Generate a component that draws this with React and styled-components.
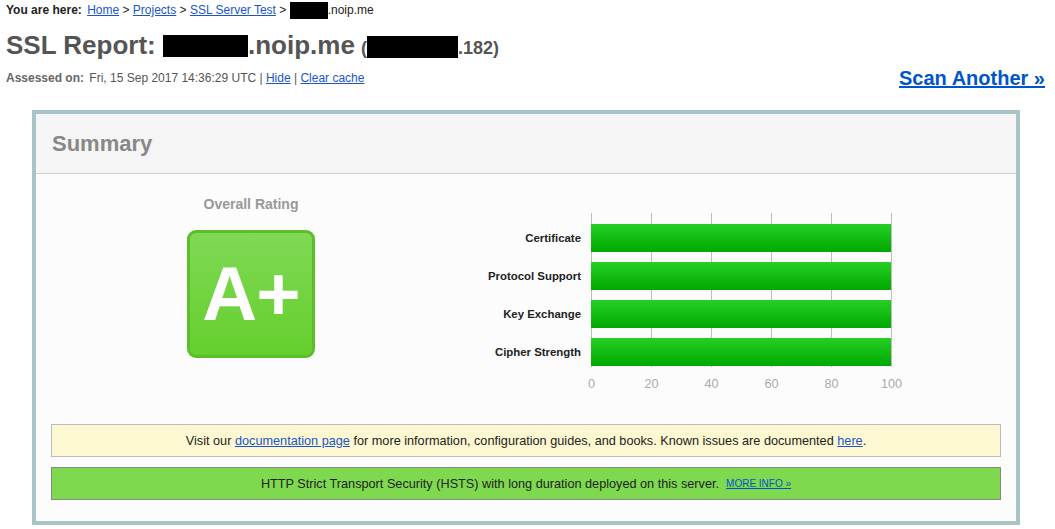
import React from "react";
import styled, { createGlobalStyle } from "styled-components";

const GlobalStyle = createGlobalStyle`
  body {
    margin: 0;
    background: #fff;
    font-family: "Liberation Sans", Arial, sans-serif;
    color: #222;
  }
`;

const Page = styled.div`
  padding: 2px 10px 0 6px;
  width: 1055px;
  box-sizing: border-box;
`;

const Crumbs = styled.div`
  font-size: 12px;
  line-height: 16px;
  height: 16px;
  color: #222;
`;

const Strong = styled.b`
  color: ${(p) => p.color || "#222"};
  margin-right: 2px;
`;

const Link = styled.a`
  color: #1a55cc;
  text-decoration: underline;
  cursor: pointer;
`;

const Redacted = styled.span`
  display: inline-block;
  background: #000;
  width: ${(p) => p.w}px;
  height: ${(p) => p.h}px;
  vertical-align: ${(p) => p.v || "middle"};
`;

const Title = styled.h1`
  margin: 12px 0 0;
  font-size: 26px;
  line-height: 30px;
  font-weight: bold;
  color: #555;
  white-space: nowrap;
`;

const TitleSmall = styled.span`
  font-size: 18px;
  margin-left: 6px;
`;

const MetaRow = styled.div`
  display: flex;
  justify-content: space-between;
  align-items: center;
  margin-top: 3px;
  height: 24px;
`;

const Assessed = styled.div`
  font-size: 12px;
  line-height: 16px;
  color: #555;
`;

const ScanAnother = styled.a`
  font-size: 20px;
  line-height: 24px;
  font-weight: bold;
  color: #0055cc;
  text-decoration: underline;
  cursor: pointer;
`;

const Summary = styled.section`
  margin: 20px 0 0 26px;
  width: 988px;
  box-sizing: border-box;
  border: 4px solid #a9c4c7;
  background: #fcfcfc;
`;

const SummaryHead = styled.div`
  height: 60px;
  box-sizing: border-box;
  display: flex;
  align-items: center;
  padding-left: 16px;
  background: #f5f5f5;
  border-bottom: 1px solid #c6d4d4;
  font-size: 22px;
  font-weight: bold;
  color: #888;
`;

const SummaryBody = styled.div`
  padding: 22px 15px 21px;
`;

const TopRow = styled.div`
  display: flex;
  margin: 0 0 26px -15px;
`;

const RatingCol = styled.div`
  width: 430px;
  display: flex;
  flex-direction: column;
  align-items: center;
`;

const RatingLabel = styled.div`
  font-size: 14px;
  line-height: 16px;
  font-weight: bold;
  color: #999;
`;

const Grade = styled.div`
  margin-top: 18px;
  width: 128px;
  height: 128px;
  box-sizing: border-box;
  border: 3px solid #5cbf2a;
  border-radius: 9px;
  background: linear-gradient(#80d955, #64cf2d);
  display: flex;
  align-items: center;
  justify-content: center;
  color: #fff;
  font-size: 76px;
  font-weight: bold;
  letter-spacing: -1px;
  padding-bottom: 2px;
`;

const Chart = styled.svg`
  margin-top: 17px;
  display: block;
  font-family: "Liberation Sans", Arial, sans-serif;
`;

const Notice = styled.div`
  height: 33px;
  box-sizing: border-box;
  display: flex;
  align-items: center;
  justify-content: center;
  font-size: 12.7px;
  color: #222;
  background: ${(p) => (p.good ? "#7ed94e" : "#fdf8d1")};
  border: 1px solid ${(p) => (p.good ? "#888" : "#bbb")};
  & + & {
    margin-top: 10px;
  }
`;

const MoreInfo = styled.a`
  font-size: 10px;
  color: #0055cc;
  text-decoration: underline;
  margin-left: 7px;
  cursor: pointer;
`;

const rows = ["Certificate", "Protocol Support", "Key Exchange", "Cipher Strength"];
const ticks = [0, 20, 40, 60, 80, 100];

function BarChart() {
  const x0 = 125;
  return (
    <Chart width="460" height="185" viewBox="0 0 460 185">
      <defs>
        <linearGradient id="bar" x1="0" y1="0" x2="0" y2="1">
          <stop offset="0" stopColor="#25d025" />
          <stop offset="1" stopColor="#00a800" />
        </linearGradient>
      </defs>
      {ticks.map((t, i) => (
        <g key={t}>
          <line x1={x0 + i * 60 + 0.5} y1="0" x2={x0 + i * 60 + 0.5} y2="154" stroke="#bdbdbd" strokeWidth="1" />
          <text x={x0 + i * 60 + 0.5} y="175" textAnchor="middle" fontSize="12.6" fill="#aaa">
            {t}
          </text>
        </g>
      ))}
      {rows.map((r, i) => (
        <g key={r}>
          <rect x={x0} y={11 + i * 38} width="300" height="28" fill="url(#bar)" />
          <text x="115" y={29 + i * 38} textAnchor="end" fontSize="11.4" fontWeight="bold" fill="#222">
            {r}
          </text>
        </g>
      ))}
    </Chart>
  );
}

export default function App() {
  return (
    <Page>
      <GlobalStyle />
      <Crumbs>
        <Strong>You are here:</Strong> <Link>Home</Link> &gt; <Link>Projects</Link> &gt;{" "}
        <Link>SSL Server Test</Link> &gt; <Redacted w={38} h={17} />
        .noip.me
      </Crumbs>
      <Title>
        SSL Report: <Redacted w={85} h={22} v="-3px" />
        .noip.me
        <TitleSmall>
          (<Redacted w={91} h={22} v="-4px" />
          .182)
        </TitleSmall>
      </Title>
      <MetaRow>
        <Assessed>
          <Strong color="#666">Assessed on:</Strong> Fri, 15 Sep 2017 14:36:29 UTC | <Link>Hide</Link> |{" "}
          <Link>Clear cache</Link>
        </Assessed>
        <ScanAnother>Scan Another »</ScanAnother>
      </MetaRow>
      <Summary>
        <SummaryHead>Summary</SummaryHead>
        <SummaryBody>
          <TopRow>
            <RatingCol>
              <RatingLabel>Overall Rating</RatingLabel>
              <Grade>A+</Grade>
            </RatingCol>
            <BarChart />
          </TopRow>
          <Notice>
            Visit our&nbsp;<Link>documentation page</Link>&nbsp;for more information, configuration guides, and
            books. Known issues are documented&nbsp;<Link>here</Link>.
          </Notice>
          <Notice good>
            HTTP Strict Transport Security (HSTS) with long duration deployed on this server.
            <MoreInfo>MORE INFO »</MoreInfo>
          </Notice>
        </SummaryBody>
      </Summary>
    </Page>
  );
}
